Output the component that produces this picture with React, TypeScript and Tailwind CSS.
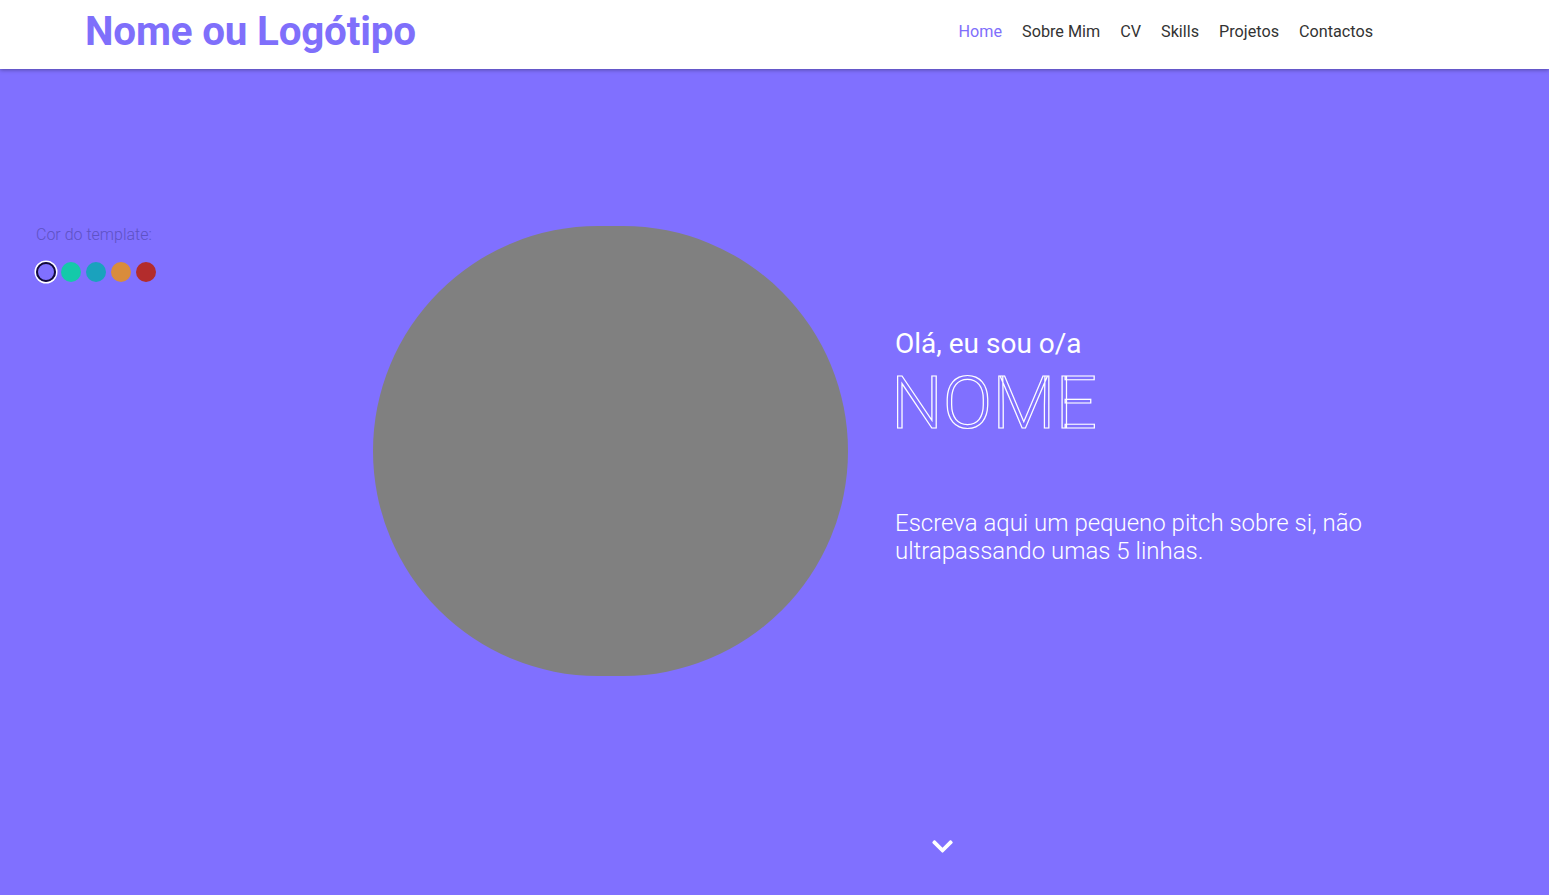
import React from "react";

export default function App() {
  const nav = ["Home", "Sobre Mim", "CV", "Skills", "Projetos", "Contactos"];
  return (
    <div className="w-[1549px] h-[895px] overflow-hidden bg-[#8070ff] relative" style={{ fontFamily: "Roboto, 'Liberation Sans', sans-serif" }}>
      <header className="relative z-10 h-[69px] bg-white shadow-[0_1px_4px_rgba(0,0,0,0.35)] flex items-center">
        <div className="ml-[85px] w-[1288px] flex items-center justify-between">
          <div className="text-[40.4px] font-bold text-[#7f6ffb] leading-none tracking-[-0.2px] -mt-[4px]">Nome ou Logótipo</div>
          <nav className="flex items-center gap-[20px] text-[16.2px] text-[#333] -mt-[4px]">
            {nav.map((n, i) => (
              <a key={n} className={i === 0 ? "text-[#7f6ffb]" : "text-[#333]"}>{n}</a>
            ))}
          </nav>
        </div>
      </header>

      <div className="absolute left-[36px] top-[223px]">
        <div className="text-[16px] font-light text-[#5e52c4]">Cor do template:</div>
        <div className="flex gap-[5px] mt-[15px]">
          <span className="w-[20px] h-[20px] rounded-full border-2 border-[#140c38] shadow-[0_0_0_1.5px_white]" />
          <span className="w-[20px] h-[20px] rounded-full bg-[#14c9a9]" />
          <span className="w-[20px] h-[20px] rounded-full bg-[#1aa2bd]" />
          <span className="w-[20px] h-[20px] rounded-full bg-[#d98c3c]" />
          <span className="w-[20px] h-[20px] rounded-full bg-[#b32c2c]" />
        </div>
      </div>

      <main className="flex items-center h-[765px] -mt-[1px]">
        <div className="ml-[373px] w-[475px] h-[450px] rounded-full bg-[#808080] shrink-0" />
        <div className="ml-[47px] pb-[8px] text-white">
          <div className="text-[28px] leading-[32px]">Olá, eu sou o/a</div>
          <div
            className="text-[73px] font-light leading-[84px] mt-[1px] -ml-[4px] text-transparent"
            style={{ WebkitTextStroke: "1.2px white" }}
          >
            NOME
          </div>
          <p className="mt-[64px] text-[24px] font-light leading-[28px] w-[480px]">
            Escreva aqui um pequeno pitch sobre si, não ultrapassando umas 5 linhas.
          </p>
        </div>
      </main>

      <div className="absolute left-[932px] top-[837px]">
        <svg width="21" height="16" viewBox="0 0 448 340" fill="white">
          <path d="M207 327L13 133c-9-9-9-25 0-34l23-23c9-9 24-9 34 0l154 153 154-153c10-9 25-9 34 0l23 23c9 9 9 25 0 34L241 327c-9 9-25 9-34 0z" />
        </svg>
      </div>
    </div>
  );
}
